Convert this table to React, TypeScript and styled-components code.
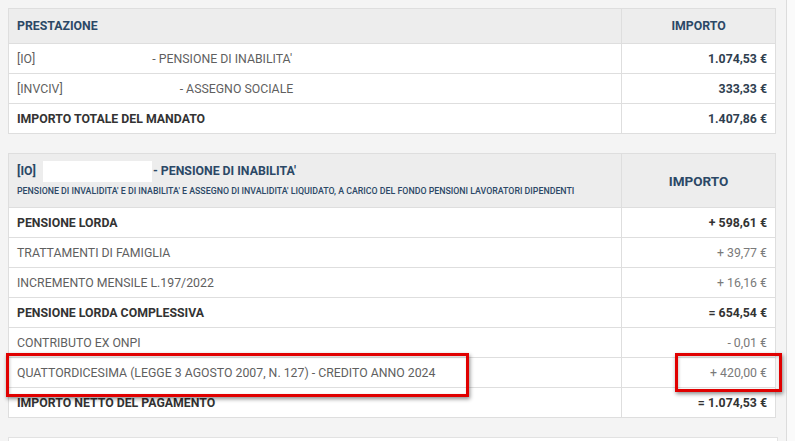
import styled, { createGlobalStyle } from 'styled-components';

const GlobalStyle = createGlobalStyle`
  html, body {
    margin: 0;
    padding: 0;
    background: #f4f4f4;
    font-family: Roboto, "Open Sans", "Liberation Sans", sans-serif;
    overflow: hidden;
  }
`;

type Row = { label: string; amount: string; bold?: boolean };

const detailRows: Row[] = [
  { label: 'PENSIONE LORDA', amount: '+ 598,61 €', bold: true },
  { label: 'TRATTAMENTI DI FAMIGLIA', amount: '+ 39,77 €' },
  { label: 'INCREMENTO MENSILE L.197/2022', amount: '+ 16,16 €' },
  { label: 'PENSIONE LORDA COMPLESSIVA', amount: '= 654,54 €', bold: true },
  { label: 'CONTRIBUTO EX ONPI', amount: '- 0,01 €' },
  { label: 'QUATTORDICESIMA (LEGGE 3 AGOSTO 2007, N. 127) - CREDITO ANNO 2024', amount: '+ 420,00 €' },
  { label: 'IMPORTO NETTO DEL PAGAMENTO', amount: '= 1.074,53 €', bold: true },
];

const App = () => {
  return (
    <>
      <GlobalStyle />
      <Page>
        <Main>
          <Table>
            <colgroup>
              <col />
              <col style={{ width: 154 }} />
            </colgroup>
            <thead>
              <tr>
                <Th>PRESTAZIONE</Th>
                <Th $center>IMPORTO</Th>
              </tr>
            </thead>
            <tbody>
              <tr>
                <Td>
                  [IO]<Gap $w={117} />- PENSIONE DI INABILITA'
                </Td>
                <Td $right $strong>1.074,53 €</Td>
              </tr>
              <tr>
                <Td>
                  [INVCIV]<Gap $w={117} />- ASSEGNO SOCIALE
                </Td>
                <Td $right $strong>333,33 €</Td>
              </tr>
              <tr>
                <Td $bold>IMPORTO TOTALE DEL MANDATO</Td>
                <Td $right $strong>1.407,86 €</Td>
              </tr>
            </tbody>
          </Table>

          <Table>
            <colgroup>
              <col />
              <col style={{ width: 154 }} />
            </colgroup>
            <thead>
              <tr>
                <HeadCell>
                  <HeadTitle>
                    [IO]<Redacted />- PENSIONE DI INABILITA'
                  </HeadTitle>
                  <HeadNote>
                    PENSIONE DI INVALIDITA' E DI INABILITA' E ASSEGNO DI INVALIDITA' LIQUIDATO, A CARICO DEL FONDO
                    PENSIONI LAVORATORI DIPENDENTI
                  </HeadNote>
                </HeadCell>
                <Th $center $large>IMPORTO</Th>
              </tr>
            </thead>
            <tbody>
              {detailRows.map((r) => (
                <tr key={r.label}>
                  <Td $bold={r.bold}>{r.label}</Td>
                  <Td $right $bold={r.bold} $muted={!r.bold}>
                    {r.amount}
                  </Td>
                </tr>
              ))}
            </tbody>
          </Table>

          <NextPanel />

          <Highlight style={{ left: 6, top: 353, width: 463, height: 44 }} />
          <Highlight style={{ left: 675, top: 353, width: 107, height: 39 }} />
        </Main>
        <ScrollTrack />
      </Page>
    </>
  );
};

export default App;

const Page = styled.div`
  display: flex;
  width: 795px;
  height: 441px;
  overflow: hidden;
`;

const Main = styled.div`
  position: relative;
  flex: 1;
  padding: 8px 8px 0 8px;
  display: flex;
  flex-direction: column;
  gap: 19px;
`;

const ScrollTrack = styled.div`
  width: 10px;
  border-left: 1px solid #dcdcdc;
  background: #fafafa;
`;

const Table = styled.table`
  width: 768px;
  border-collapse: collapse;
  table-layout: fixed;
  background: #fff;
  border: 1px solid #dedede;
`;

const Th = styled.th<{ $center?: boolean; $large?: boolean }>`
  height: 34px;
  padding: 0 8px;
  background: #ededed;
  border: 1px solid #dedede;
  color: #2b4866;
  font-size: ${(p) => (p.$large ? '13.5px' : '12.3px')};
  font-weight: 700;
  text-align: ${(p) => (p.$center ? 'center' : 'left')};
  vertical-align: middle;
`;

const HeadCell = styled.th`
  height: 48px;
  padding: 5px 8px 0 8px;
  background: #ededed;
  border: 1px solid #dedede;
  text-align: left;
  vertical-align: top;
`;

const HeadTitle = styled.div`
  display: flex;
  align-items: center;
  color: #2b4866;
  font-size: 12.3px;
  font-weight: 700;
  height: 24px;
`;

const Redacted = styled.span`
  display: inline-block;
  width: 109px;
  height: 21px;
  margin: 0 1px 0 7px;
  background: #fff;
`;

const HeadNote = styled.div`
  margin-top: 3px;
  color: #2b4866;
  font-size: 8.8px;
  font-weight: 500;
  white-space: nowrap;
`;

const Gap = styled.span<{ $w: number }>`
  display: inline-block;
  width: ${(p) => p.$w}px;
`;

const Td = styled.td<{ $right?: boolean; $bold?: boolean; $strong?: boolean; $muted?: boolean }>`
  height: 29px;
  padding: 0 8px;
  border: 1px solid #dedede;
  font-size: 12.3px;
  white-space: nowrap;
  text-align: ${(p) => (p.$right ? 'right' : 'left')};
  font-weight: ${(p) => (p.$bold || p.$strong ? 700 : 400)};
  color: ${(p) => (p.$strong ? '#2f3e4f' : p.$bold ? '#333' : p.$muted ? '#7a7a7a' : '#5f5f5f')};
`;

const NextPanel = styled.div`
  height: 20px;
  width: 768px;
  background: #fff;
  border: 1px solid #e2e2e2;
  border-bottom: none;
`;

const Highlight = styled.div`
  position: absolute;
  box-sizing: border-box;
  border: 3px solid #e00000;
  box-shadow: 1px 2px 4px rgba(0, 0, 0, 0.45), inset 1px 1px 3px rgba(0, 0, 0, 0.2);
  pointer-events: none;
`;
